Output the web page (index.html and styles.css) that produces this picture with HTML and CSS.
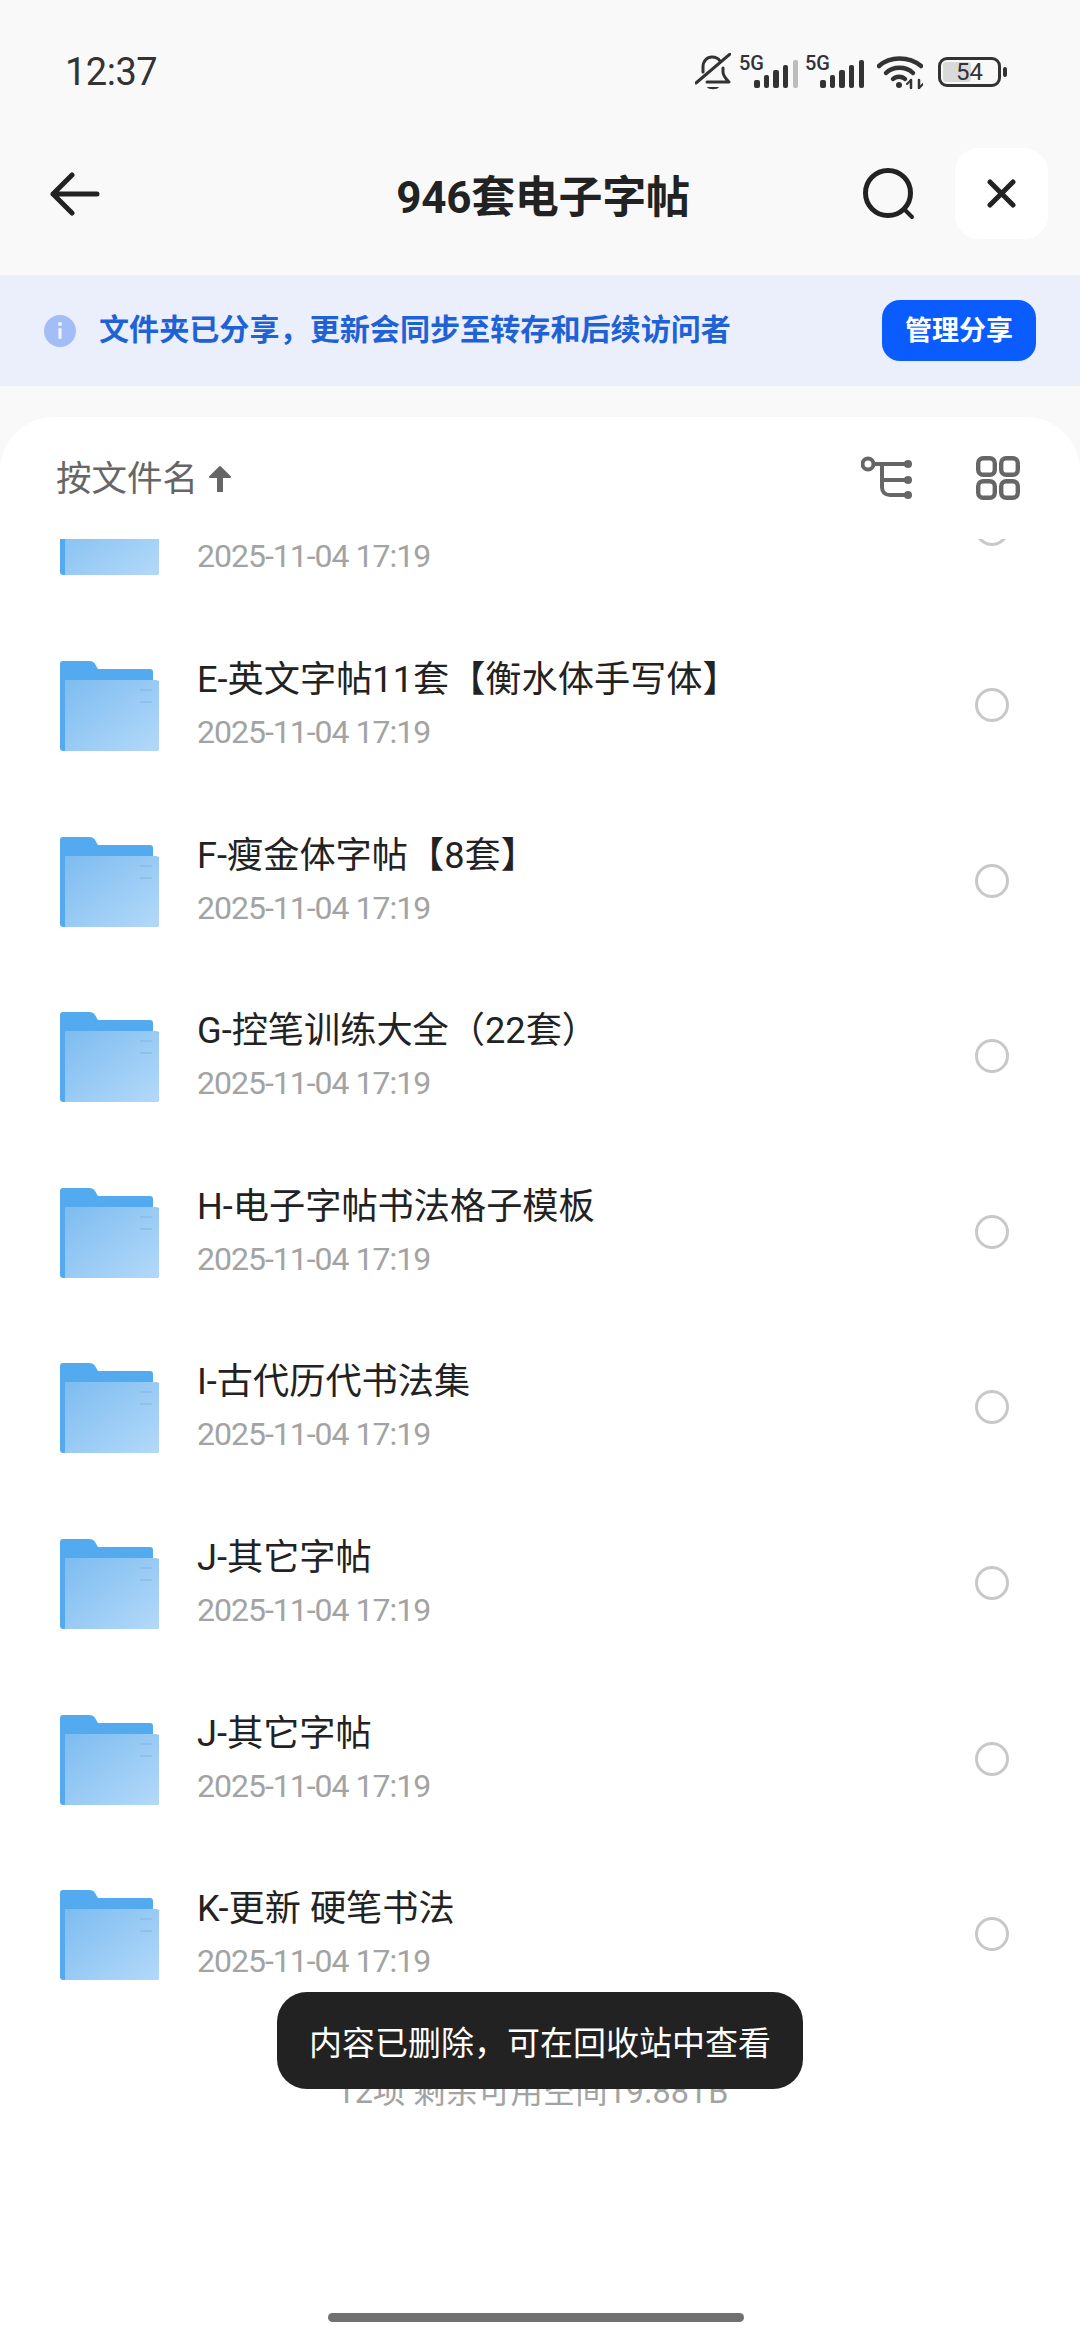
FILE: index.html
```html
<!DOCTYPE html>
<html lang="zh-CN">
<head>
    <meta charset="UTF-8">
    <title>946套电子字帖</title>
    <link rel="stylesheet" href="styles.css">
</head>
<body>
    <svg class="defs" width="0" height="0" aria-hidden="true">
        <defs>
            <linearGradient id="folder-front" x1="0" y1="0" x2="1" y2="1">
                <stop offset="0" stop-color="#7dbcf0"/>
                <stop offset="1" stop-color="#b3d9f9"/>
            </linearGradient>
            <g id="folder">
                <path d="M3 0H29C32 0 34 1 35 3L38 8H90C92 8 93 9 93 11V20H99V87C99 89 98 90 96 90H4C1 90 0 89 0 86V3C0 1 1 0 3 0Z" fill="#53aaee"/>
                <path d="M5 19H96C98 19 99 20 99 22V87C99 89 98 90 96 90H5Z" fill="url(#folder-front)"/>
                <path d="M80 29H92M80 41H92" stroke="#8bb9e0" stroke-width="2" opacity="0.6"/>
            </g>
        </defs>
    </svg>

    <div class="page">
        <div class="status-bar">
            <span class="clock">12:37</span>
            <div class="status-icons">
                <svg class="icon-bell" width="36" height="38" viewBox="0 0 36 38" fill="none" stroke="#333" stroke-width="3" stroke-linecap="round" stroke-linejoin="round">
                    <path d="M25 8C23 5 20 4 17 4C12 4 8 8 8 14V19M28 15V19C28 23 31 26 34 29H12"/>
                    <path d="M1 30L35 1"/>
                    <path d="M12 34H24C23 37 13 37 12 34Z" fill="#333" stroke="none"/>
                </svg>
                <div class="signal">
                    <span class="net-label">5G</span>
                    <div class="bars">
                        <i class="bar bar-1"></i><i class="bar bar-2"></i><i class="bar bar-3"></i><i class="bar bar-4"></i><i class="bar bar-5 bar-off"></i>
                    </div>
                </div>
                <div class="signal">
                    <span class="net-label">5G</span>
                    <div class="bars">
                        <i class="bar bar-1"></i><i class="bar bar-2"></i><i class="bar bar-3"></i><i class="bar bar-4"></i><i class="bar bar-5"></i>
                    </div>
                </div>
                <svg class="icon-wifi" width="46" height="34" viewBox="0 0 46 34" fill="none" stroke="#333" stroke-width="4.5" stroke-linecap="round">
                    <path d="M2 11C13 1 32 1 44 11"/>
                    <path d="M9 18C16 11 29 11 36 18"/>
                    <path d="M16 24C19 21 25 21 28 24"/>
                    <circle cx="22" cy="30" r="3" fill="#333" stroke="none"/>
                    <path d="M34 25V33M42 25V33" stroke-width="2.5"/>
                    <path d="M30 29L34 25M42 33L46 29" stroke-width="2"/>
                </svg>
                <div class="battery">
                    <div class="battery-body">
                        <div class="battery-fill"></div>
                        <span class="battery-level">54</span>
                    </div>
                    <div class="battery-nub"></div>
                </div>
            </div>
        </div>

        <div class="nav-bar">
            <svg class="icon-back" width="50" height="44" viewBox="0 0 50 44" fill="none" stroke="#222" stroke-width="5" stroke-linecap="round" stroke-linejoin="round">
                <path d="M22 3L3 22L22 41M3 22H47"/>
            </svg>
            <h1 class="nav-title">946套电子字帖</h1>
            <div class="nav-actions">
                <svg width="52" height="52" viewBox="0 0 52 52" fill="none" stroke="#222" stroke-linecap="round">
                    <circle cx="25" cy="25" r="22.5" stroke-width="5"/>
                    <path d="M41 41L49 49" stroke-width="4"/>
                </svg>
                <div class="close-tile">
                    <svg width="29" height="29" viewBox="0 0 29 29" fill="none" stroke="#222" stroke-width="5" stroke-linecap="round">
                        <path d="M3 3L26 26M26 3L3 26"/>
                    </svg>
                </div>
            </div>
        </div>

        <div class="share-banner">
            <svg width="32" height="32" viewBox="0 0 32 32">
                <circle cx="16" cy="16" r="16" fill="#a3bdf6"/>
                <circle cx="16" cy="9" r="2" fill="#eef2fd"/>
                <rect x="14.4" y="13" width="3.2" height="11" rx="1.2" fill="#eef2fd"/>
            </svg>
            <span class="share-text">文件夹已分享，更新会同步至转存和后续访问者</span>
            <div class="share-button">管理分享</div>
        </div>

        <div class="sheet">
            <div class="sort-bar">
                <div class="sort-label">
                    <span class="sort-text">按文件名</span>
                    <svg width="26" height="29" viewBox="0 0 26 29" fill="none" stroke="#666" stroke-width="6" stroke-linejoin="round">
                        <path d="M13 28V5"/>
                        <path d="M13 3L3 13H23Z" fill="#666" stroke-width="2"/>
                    </svg>
                </div>
                <div class="sort-icons">
                    <svg width="53" height="44" viewBox="0 0 53 44" fill="none" stroke="#666" stroke-width="4" stroke-linecap="round">
                        <circle cx="7" cy="8" r="5.5"/>
                        <path d="M13 8H47M21 8V31C21 36 24 39 29 39H47M21 24H47"/>
                        <circle cx="47" cy="8" r="4" fill="#666" stroke="none"/>
                        <circle cx="47" cy="24" r="4" fill="#666" stroke="none"/>
                        <circle cx="47" cy="39" r="4" fill="#666" stroke="none"/>
                    </svg>
                    <svg width="44" height="44" viewBox="0 0 44 44" fill="none" stroke="#666" stroke-width="4.4">
                        <rect x="2.2" y="2.2" width="16.6" height="16.6" rx="5"/>
                        <rect x="25.2" y="2.2" width="16.6" height="16.6" rx="5"/>
                        <rect x="2.2" y="25.2" width="16.6" height="16.6" rx="5"/>
                        <rect x="25.2" y="25.2" width="16.6" height="16.6" rx="5"/>
                    </svg>
                </div>
            </div>

            <div class="file-list">
                <div class="file-row">
                    <svg class="folder" width="99" height="90" viewBox="0 0 99 90"><use href="#folder"/></svg>
                    <div class="file-info">
                        <div class="file-name">&nbsp;</div>
                        <div class="file-date">2025-11-04 17:19</div>
                    </div>
                    <div class="radio"></div>
                </div>
                <div class="file-row">
                    <svg class="folder" width="99" height="90" viewBox="0 0 99 90"><use href="#folder"/></svg>
                    <div class="file-info">
                        <div class="file-name">E-英文字帖11套【衡水体手写体】</div>
                        <div class="file-date">2025-11-04 17:19</div>
                    </div>
                    <div class="radio"></div>
                </div>
                <div class="file-row">
                    <svg class="folder" width="99" height="90" viewBox="0 0 99 90"><use href="#folder"/></svg>
                    <div class="file-info">
                        <div class="file-name">F-瘦金体字帖【8套】</div>
                        <div class="file-date">2025-11-04 17:19</div>
                    </div>
                    <div class="radio"></div>
                </div>
                <div class="file-row">
                    <svg class="folder" width="99" height="90" viewBox="0 0 99 90"><use href="#folder"/></svg>
                    <div class="file-info">
                        <div class="file-name">G-控笔训练大全（22套）</div>
                        <div class="file-date">2025-11-04 17:19</div>
                    </div>
                    <div class="radio"></div>
                </div>
                <div class="file-row">
                    <svg class="folder" width="99" height="90" viewBox="0 0 99 90"><use href="#folder"/></svg>
                    <div class="file-info">
                        <div class="file-name">H-电子字帖书法格子模板</div>
                        <div class="file-date">2025-11-04 17:19</div>
                    </div>
                    <div class="radio"></div>
                </div>
                <div class="file-row">
                    <svg class="folder" width="99" height="90" viewBox="0 0 99 90"><use href="#folder"/></svg>
                    <div class="file-info">
                        <div class="file-name">I-古代历代书法集</div>
                        <div class="file-date">2025-11-04 17:19</div>
                    </div>
                    <div class="radio"></div>
                </div>
                <div class="file-row">
                    <svg class="folder" width="99" height="90" viewBox="0 0 99 90"><use href="#folder"/></svg>
                    <div class="file-info">
                        <div class="file-name">J-其它字帖</div>
                        <div class="file-date">2025-11-04 17:19</div>
                    </div>
                    <div class="radio"></div>
                </div>
                <div class="file-row">
                    <svg class="folder" width="99" height="90" viewBox="0 0 99 90"><use href="#folder"/></svg>
                    <div class="file-info">
                        <div class="file-name">J-其它字帖</div>
                        <div class="file-date">2025-11-04 17:19</div>
                    </div>
                    <div class="radio"></div>
                </div>
                <div class="file-row">
                    <svg class="folder" width="99" height="90" viewBox="0 0 99 90"><use href="#folder"/></svg>
                    <div class="file-info">
                        <div class="file-name">K-更新 硬笔书法</div>
                        <div class="file-date">2025-11-04 17:19</div>
                    </div>
                    <div class="radio"></div>
                </div>
                <div class="list-footer">12项 剩余可用空间19.88TB</div>
            </div>

            <div class="home-bar"></div>
        </div>

        <div class="toast">内容已删除，可在回收站中查看</div>
    </div>
</body>
</html>
```

FILE: styles.css
```css
* {
    box-sizing: border-box;
}

body {
    margin: 0;
    font-family: Roboto, "Noto Sans CJK SC", sans-serif;
    background: #f9f9fa;
    color: #222;
}

.defs {
    position: absolute;
}

.page {
    position: relative;
    width: 1080px;
    height: 2339px;
    display: flex;
    flex-direction: column;
    overflow: hidden;
    background: #f9f9fa;
}

/* status bar */
.status-bar {
    height: 144px;
    flex: none;
    display: flex;
    align-items: center;
    justify-content: space-between;
    padding: 0 73px 0 65px;
}

.clock {
    font-size: 38px;
    letter-spacing: -0.5px;
    color: #333;
}

.status-icons {
    display: flex;
    align-items: center;
}

.icon-bell {
    margin-right: 8px;
}

.signal {
    position: relative;
    width: 44px;
    height: 30px;
    margin-top: 2px;
    margin-right: 22px;
}

.signal:first-of-type {
    margin-left: 15px;
    margin-right: 22px;
}

.net-label {
    position: absolute;
    left: -15px;
    top: -5px;
    font-size: 20px;
    font-weight: 500;
    line-height: 20px;
    color: #333;
}

.bars {
    display: flex;
    align-items: flex-end;
    justify-content: space-between;
    height: 100%;
}

.bar {
    width: 5.5px;
    border-radius: 2px;
    background: #333;
}

.bar-1 { height: 8px; }
.bar-2 { height: 13px; }
.bar-3 { height: 18px; }
.bar-4 { height: 23px; }
.bar-5 { height: 28px; }
.bar-off { background: #bdbdbd; }

.icon-wifi {
    margin-left: -9px;
    margin-right: 15px;
}

.battery {
    display: flex;
    align-items: center;
    gap: 2px;
}

.battery-body {
    position: relative;
    width: 63px;
    height: 30px;
    border: 3px solid #333;
    border-radius: 9px;
    display: flex;
    align-items: center;
    justify-content: center;
    overflow: hidden;
}

.battery-fill {
    position: absolute;
    left: 2px;
    top: 2px;
    bottom: 2px;
    width: 28px;
    background: #d9d9d9;
    border-radius: 3px;
}

.battery-level {
    position: relative;
    font-size: 24px;
    line-height: 24px;
    color: #333;
}

.battery-nub {
    width: 4px;
    height: 10px;
    border-radius: 2px;
    background: #333;
}

/* nav */
.nav-bar {
    height: 99px;
    flex: none;
    display: grid;
    grid-template-columns: 1fr auto 1fr;
    align-items: center;
    padding: 0 32px 0 38px;
}

.icon-back {
    margin-left: 12px;
}

.nav-title {
    margin: 0;
    font-size: 44px;
    font-weight: 700;
    letter-spacing: -0.3px;
    color: #222;
}

.nav-actions {
    display: flex;
    align-items: center;
    justify-content: flex-end;
    gap: 40px;
}

.close-tile {
    width: 93px;
    height: 91px;
    display: flex;
    align-items: center;
    justify-content: center;
    background: #fff;
    border-radius: 24px;
}

/* share banner */
.share-banner {
    height: 111px;
    flex: none;
    margin-top: 32px;
    display: flex;
    align-items: center;
    padding: 0 44px 0 44px;
    background: #ebeefb;
}

.share-text {
    margin-left: 23px;
    padding-bottom: 8px;
    font-size: 30.1px;
    font-weight: 700;
    color: #1f62d6;
}

.share-button {
    margin-left: auto;
    width: 154px;
    height: 61px;
    padding-bottom: 5px;
    display: flex;
    align-items: center;
    justify-content: center;
    font-size: 27px;
    font-weight: 700;
    color: #fff;
    background: #0b5cff;
    border-radius: 18px;
}

/* sheet */
.sheet {
    flex: 1;
    min-height: 0;
    margin-top: 31px;
    display: flex;
    flex-direction: column;
    background: #fff;
    border-radius: 54px 54px 0 0;
}

.sort-bar {
    height: 122px;
    flex: none;
    display: flex;
    align-items: center;
    justify-content: space-between;
    padding: 0 60px 0 56px;
}

.sort-label {
    display: flex;
    align-items: center;
    gap: 9px;
    font-size: 35.5px;
    color: #666;
}

.sort-text {
    padding-bottom: 5px;
}

.sort-icons {
    display: flex;
    align-items: center;
    gap: 62px;
}

.file-list {
    flex: 1;
    min-height: 0;
    overflow: hidden;
}

.file-row {
    height: 175.6px;
    display: flex;
    align-items: center;
    padding: 0 71px 0 60px;
}

/* list is scrolled, the first row sits partly under the sort bar */
.file-row:first-child {
    margin-top: -96.4px;
}

.folder {
    flex: none;
}

.file-info {
    flex: 1;
    margin-left: 38px;
    padding-bottom: 11px;
}

.file-name {
    font-size: 36.2px;
    line-height: 52px;
    color: #222;
}

.file-date {
    margin-top: 11px;
    font-size: 32px;
    line-height: 30px;
    letter-spacing: -1px;
    color: #a3a3a3;
}

.radio {
    width: 34px;
    height: 34px;
    flex: none;
    margin-bottom: 2px;
    border: 3px solid #c8c8c8;
    border-radius: 50%;
}

.list-footer {
    margin-top: 46px;
    padding-right: 15px;
    font-size: 32.4px;
    line-height: 46px;
    text-align: center;
    color: #a3a3a3;
}

.home-bar {
    width: 416px;
    height: 9px;
    flex: none;
    align-self: center;
    margin: 0 0 17px -9px;
    background: #707070;
    border-radius: 5px;
}

/* toast */
.toast {
    position: absolute;
    left: 277px;
    top: 1992px;
    width: 526px;
    height: 97px;
    display: flex;
    align-items: center;
    justify-content: center;
    font-size: 33px;
    color: #fff;
    background: #222;
    border-radius: 30px;
}
```
